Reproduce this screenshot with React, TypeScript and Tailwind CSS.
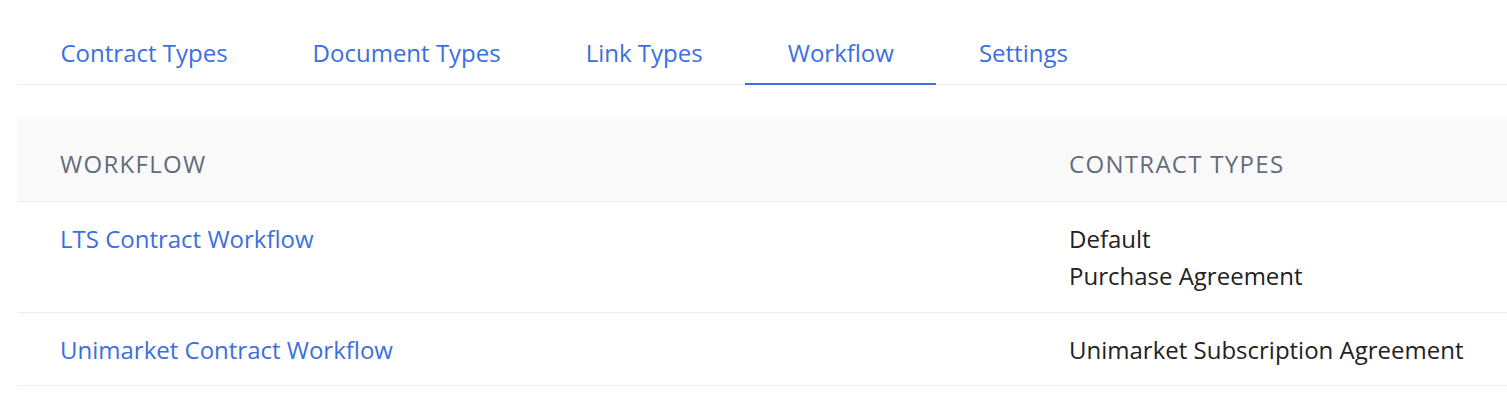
import React from 'react';

const tabs = ['Contract Types', 'Document Types', 'Link Types', 'Workflow', 'Settings'];

const rows = [
  { name: 'LTS Contract Workflow', types: ['Default', 'Purchase Agreement'] },
  { name: 'Unimarket Contract Workflow', types: ['Unimarket Subscription Agreement'] },
];

export default function App() {
  return (
    <main className="min-h-screen bg-white pl-[18px] pt-[15px] text-[24px] leading-[37px] font-['Open_Sans',sans-serif]">
      {/* Tabs */}
      <nav className="flex border-b border-[#eeeeee]">
        {tabs.map((tab) => (
          <a
            key={tab}
            className={`px-[42.5px] pt-[19px] pb-[12px] text-[#3b6fe0] ${
              tab === 'Workflow' ? 'border-b-2 border-[#3b6fe0] -mb-px' : 'border-b-2 border-transparent -mb-px'
            }`}
          >
            {tab}
          </a>
        ))}
      </nav>

      {/* Table */}
      <table className="mt-[34px] w-full border-collapse text-left">
        <thead>
          <tr className="bg-[#f9f9f9] border-b border-[#eeeeee]">
            <th className="w-[1051px] pl-[42px] pt-[26px] pb-[19px] font-normal uppercase tracking-[1.3px] text-[#636b7b]">Workflow</th>
            <th className="pt-[26px] pb-[19px] font-normal uppercase tracking-[1.3px] text-[#636b7b]">Contract Types</th>
          </tr>
        </thead>
        <tbody>
          {rows.map((row) => (
            <tr key={row.name} className="border-b border-[#eeeeee] align-top">
              <td className="pl-[42px] pt-[18px] pb-[17.5px]">
                <a className="text-[#3b6fe0]">{row.name}</a>
              </td>
              <td className="pt-[18px] pb-[17.5px] text-[#222222]">
                {row.types.map((t) => (
                  <div key={t}>{t}</div>
                ))}
              </td>
            </tr>
          ))}
        </tbody>
      </table>
    </main>
  );
}
